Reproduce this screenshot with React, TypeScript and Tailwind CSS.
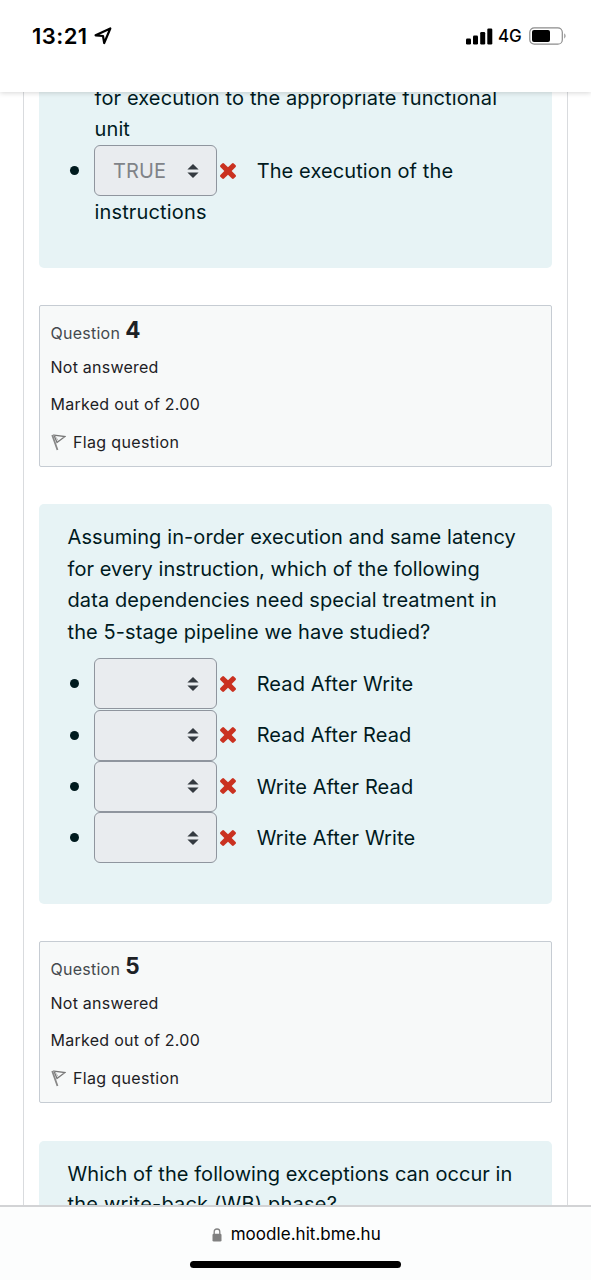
import type { ReactNode } from "react";

function CrossMark() {
  return (
    <svg className="ml-[3.5px] h-[16px] w-[16px] shrink-0" viewBox="302 366 1188 1188" fill="#ca3120" aria-hidden="true">
      <path d="M1490 1322q0 40-28 68l-136 136q-28 28-68 28t-68-28l-294-294-294 294q-28 28-68 28t-68-28l-136-136q-28-28-28-68t28-68l294-294-294-294q-28-28-28-68t28-68l136-136q28-28 68-28t68 28l294 294 294-294q28-28 68-28t68 28l136 136q28 28 28 68t-28 68l-294 294 294 294q28 28 28 68z" />
    </svg>
  );
}

function SelectBox({ value = "" }: { value?: string }) {
  return (
    <div className="flex h-[51px] w-[123px] shrink-0 items-center justify-between rounded-[6px] border-[1.5px] border-[#8f959e] bg-[#e9ecef] pr-[17px] pl-[18.5px] text-[#7f8388]">
      <span className="relative top-[1px] text-[20px] tracking-[0.1px]">{value}</span>
      <svg className="h-[14px] w-[12px]" viewBox="0 0 12 14" fill="#343a40" aria-hidden="true">
        <path d="M6 0L11.6 5.6H0.4Z M6 14L11.6 8.4H0.4Z" />
      </svg>
    </div>
  );
}

function AnswerRow({ value, children }: { value?: string; children: ReactNode }) {
  return (
    <li className="flex h-[51.4px] items-center">
      <span className="mr-[14.5px] ml-[2.5px] h-[9px] w-[9px] shrink-0 rounded-full bg-[#001a1e]" />
      <SelectBox value={value} />
      <CrossMark />
      <span className="ml-[20.7px] pt-[2px] whitespace-nowrap">{children}</span>
    </li>
  );
}

function QuestionInfo({ number }: { number: number }) {
  return (
    <section className="h-[162px] shrink-0 rounded-[2px] border-[1.5px] border-[#c6ccd3] bg-[#f7f9f9] pl-[11px] text-[16px] text-[#1d2125]">
      <h3 className="mt-[10px] flex h-[30px] items-baseline text-[16px] leading-[30px] text-[#44494e]">
        <span className="tracking-[0.25px]">Question</span>
        <span className="relative top-[-1px] ml-[5px] text-[22.5px] font-bold text-[#1d2125]">{number}</span>
      </h3>
      <p className="mt-[9px] h-[24px] leading-[24px] tracking-[0.24px]">Not answered</p>
      <p className="mt-[13.3px] h-[24px] leading-[24px] tracking-[0.27px]">Marked out of 2.00</p>
      <p className="mt-[13.7px] flex h-[24px] items-center leading-[24px]">
        <svg className="mr-[7.5px] h-[18px] w-[15px]" viewBox="0 0 15 18" fill="none" stroke="#777" strokeWidth="1.3" aria-hidden="true">
          <path d="M1.2 2L6.5 17" stroke="#888" strokeWidth="1.8" />
          <path d="M3 2.2L14 3.5L6 9.5Z" />
          <path d="M3.5 2.2L7.5 8" stroke="#aaa" strokeWidth="0.8" />
        </svg>
        <span className="tracking-[0.34px]">Flag question</span>
      </p>
    </section>
  );
}

function StatusBar() {
  return (
    <header className="relative z-10 flex h-[92px] shrink-0 justify-between bg-white pt-[22px] pr-[24px] pl-[32px] text-black shadow-[0_1px_5px_rgba(0,0,0,0.16)]">
      <div className="flex h-[28px] items-center">
        <span className="text-[22px] font-semibold tracking-[0.45px]">13:21</span>
        <svg className="ml-[6.5px] h-[18px] w-[18px]" viewBox="0 0 18 18" fill="none" stroke="#000" strokeWidth="2.2" strokeLinejoin="round" aria-hidden="true">
          <path d="M16.3 1.5L10.2 16L9 9L1.6 8.3Z" />
        </svg>
      </div>
      <div className="flex h-[28px] items-center">
        <svg className="h-[17px] w-[28px]" viewBox="0 0 28 17" aria-hidden="true">
          <rect x="0" y="10.5" width="5" height="6" rx="1.2" />
          <rect x="7" y="7.5" width="5" height="9" rx="1.2" />
          <rect x="14.2" y="4" width="5" height="12.5" rx="1.2" />
          <rect x="21.3" y="0.5" width="5" height="16" rx="1.2" />
        </svg>
        <span className="ml-[4.5px] w-[23px] pt-[1px] text-[17px] font-medium tracking-[-0.2px]">4G</span>
        <svg className="ml-[8px] h-[18px] w-[38px]" viewBox="0 0 38 18" aria-hidden="true">
          <rect x="0.8" y="0.8" width="32.5" height="16.4" rx="4.5" fill="#fff" stroke="#8c8c8c" strokeWidth="1.2" />
          <rect x="3" y="3" width="18" height="12" rx="2" />
          <path d="M35.3 6.3Q37.8 9 35.3 11.7Z" fill="#888" />
        </svg>
      </div>
    </header>
  );
}

function AddressBar() {
  return (
    <footer className="flex h-[75px] shrink-0 flex-col items-center border-t-2 border-[#d2d3d5] bg-[#fcfdfd] text-black">
      <div className="mt-[15px] ml-[2px] flex h-[26px] items-center">
        <svg className="mr-[8.5px] h-[14px] w-[10px]" viewBox="0 0 10 14" aria-hidden="true">
          <path d="M2.2 6V3.8Q2.2 1 5 1T7.8 3.8V6" fill="none" stroke="#808080" strokeWidth="1.3" />
          <rect x="0.5" y="5.8" width="9" height="7.7" rx="1.3" fill="#808080" />
        </svg>
        <span className="text-[17px] tracking-[0.04px]">moodle.hit.bme.hu</span>
      </div>
      <div className="mt-[13px] h-[7px] w-[211px] rounded-full bg-black" />
    </footer>
  );
}

export default function App() {
  return (
    <div className="flex h-[1280px] w-[591px] flex-col overflow-hidden bg-white font-['Inter',sans-serif]">
      <StatusBar />
      <main className="min-h-0 flex-1 overflow-hidden pr-[23px] pl-[23px]">
        <div className="flex h-full flex-col border-x-[1.5px] border-[#d9dbde] pr-[15px] pl-[14.5px] text-[20px] leading-[31.5px] tracking-[0.1px] text-[#001a1e]">
          <section className="h-[176px] shrink-0 overflow-hidden rounded-b-[5px] bg-[#e7f3f5] pl-[29px]">
            <ul className="-mt-[9px]">
              <li className="pl-[27px] leading-[31px] tracking-[0.12px] whitespace-nowrap">
                for execution to the appropriate functional
                <br />
                unit
              </li>
              <AnswerRow value="TRUE">The execution of the</AnswerRow>
              <li className="pt-[0.5px] pl-[27px] tracking-[0.15px]">instructions</li>
            </ul>
          </section>
          <div className="h-[37px] shrink-0" />
          <QuestionInfo number={4} />
          <div className="h-[37px] shrink-0" />
          <section className="h-[400px] shrink-0 rounded-[5px] bg-[#e7f3f5] pt-[18px] pl-[29px]">
            <p className="whitespace-nowrap">
              Assuming in-order execution and same latency
              <br />
              <span className="tracking-[0.06px]">for every instruction, which of the following</span>
              <br />
              data dependencies need special treatment in
              <br />
              the 5-stage pipeline we have studied?
            </p>
            <ul className="mt-[10px]">
              <AnswerRow>Read After Write</AnswerRow>
              <AnswerRow>Read After Read</AnswerRow>
              <AnswerRow>Write After Read</AnswerRow>
              <AnswerRow>Write After Write</AnswerRow>
            </ul>
          </section>
          <div className="h-[37px] shrink-0" />
          <QuestionInfo number={5} />
          <div className="h-[38px] shrink-0" />
          <section className="h-[120px] shrink-0 rounded-t-[5px] bg-[#e7f3f5] pt-[18px] pl-[29px] tracking-[0.06px]">
            <p className="leading-[30px] whitespace-nowrap">
              Which of the following exceptions can occur in
              <br />
              <span className="tracking-[0.2px]">the write-back (WB) phase?</span>
            </p>
          </section>
        </div>
      </main>
      <AddressBar />
    </div>
  );
}
